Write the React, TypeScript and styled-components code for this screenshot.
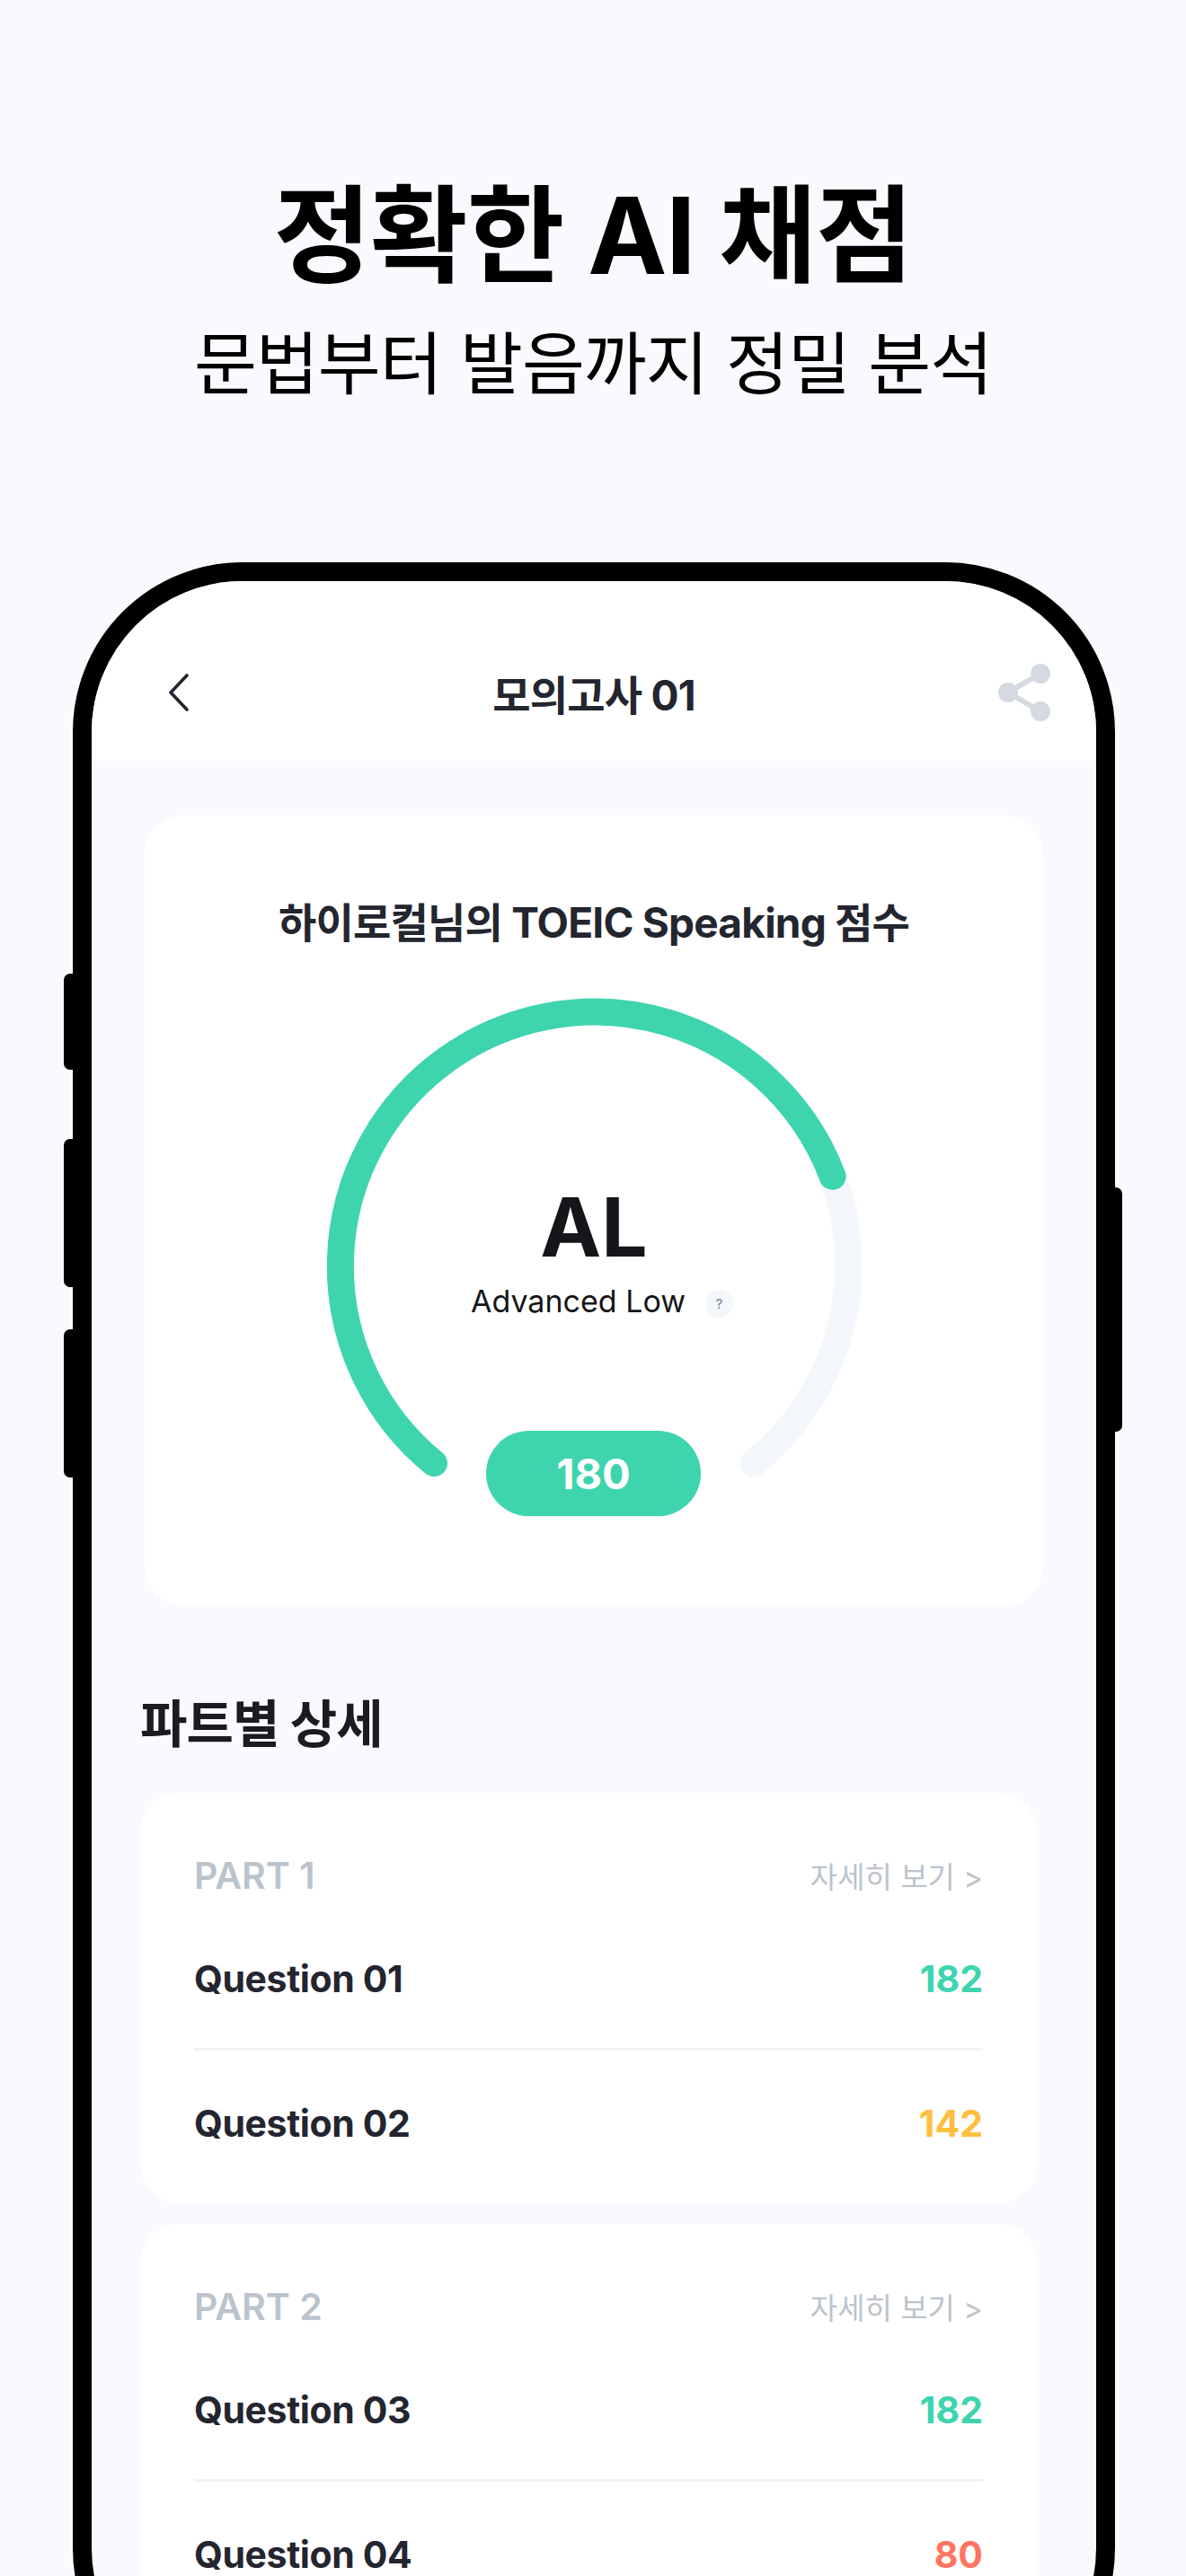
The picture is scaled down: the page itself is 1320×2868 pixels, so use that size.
import React from "react";
import styled, { createGlobalStyle } from "styled-components";

const Global = createGlobalStyle`
  html, body { margin: 0; padding: 0; height: 2868px; overflow: hidden; background: #f9fafe; }
  body { font-family: Inter, "Noto Sans CJK KR", sans-serif; color: #000; }
  * { box-sizing: border-box; }
`;

const Page = styled.div`
  width: 1320px;
  height: 2868px;
  overflow: hidden;
  background: #f9fafe;
`;
const Hero = styled.header`
  height: 626px;
  padding-top: 197px;
  display: flex;
  flex-direction: column;
  align-items: center;
`;
const Headline = styled.h1`
  margin: 0;
  font-size: 118px;
  line-height: 130px;
  font-weight: 700;
  letter-spacing: -1px;
`;
const Subline = styled.p`
  margin: 30px 0 0;
  font-size: 76px;
  line-height: 96px;
  font-weight: 400;
  letter-spacing: -1px;
`;
const Phone = styled.div`
  position: relative;
  width: 1160px;
  height: 2400px;
  margin-left: 81px;
  border: 21px solid #000;
  border-radius: 189px;
  background: #f9fafe;
`;
const SideKey = styled.span<{ $side: "left" | "right"; $top: number; $height: number }>`
  position: absolute;
  top: ${(p) => p.$top}px;
  height: ${(p) => p.$height}px;
  background: #000;
  ${(p) =>
    p.$side === "left"
      ? "left: -31px; width: 10px; border-radius: 7px 0 0 7px;"
      : "right: -29px; width: 8px; border-radius: 0 7px 7px 0;"}
`;
const Screen = styled.div`
  height: 100%;
  border-radius: 168px;
  overflow: hidden;
`;
const NavBar = styled.div`
  height: 200px;
  background: #fff;
  padding: 48px 51px 0 85px;
  display: flex;
  align-items: center;
  justify-content: space-between;
`;
const NavTitle = styled.div`
  font-size: 46px;
  font-weight: 700;
  color: #23262f;
  letter-spacing: -0.8px;
`;
const ScoreCard = styled.section`
  margin: 61px 59px 0;
  height: 879px;
  background: #fff;
  border-radius: 44px;
  display: flex;
  flex-direction: column;
  align-items: center;
  padding-top: 87px;
`;
const ScoreTitle = styled.h2`
  margin: 0;
  font-size: 46px;
  line-height: 64px;
  font-weight: 700;
  color: #23262f;
  letter-spacing: -0.8px;
`;
const Gauge = styled.div`
  position: relative;
  width: 596px;
  height: 596px;
  margin-top: 51px;
  svg { display: block; }
`;
const GaugeCenter = styled.div`
  position: absolute;
  left: 0;
  right: 0;
  top: 201px;
  display: flex;
  flex-direction: column;
  align-items: center;
`;
const Grade = styled.div`
  font-size: 91px;
  line-height: 110px;
  font-weight: 700;
  color: #15161a;
`;
const GradeRow = styled.div`
  margin: 6px 0 0 18px;
  display: flex;
  align-items: center;
  gap: 22px;
`;
const GradeName = styled.span`
  font-size: 34px;
  line-height: 44px;
  color: #15161a;
`;
const Help = styled.span`
  margin-top: 4px;
  width: 31px;
  height: 31px;
  border-radius: 50%;
  background: #f3f6fb;
  color: #8a8f99;
  font-size: 15px;
  font-weight: 500;
  display: flex;
  align-items: center;
  justify-content: center;
`;
const ScorePill = styled.div`
  position: absolute;
  left: 178px;
  top: 483px;
  width: 239px;
  height: 95px;
  border-radius: 48px;
  background: #3ed5ae;
  color: #fff;
  font-size: 47px;
  font-weight: 700;
  display: flex;
  align-items: center;
  justify-content: center;
`;
const SectionTitle = styled.h2`
  margin: 102px 0 45px 54px;
  font-size: 57px;
  line-height: 62px;
  font-weight: 700;
  color: #1b1c20;
  letter-spacing: -1px;
`;
const PartCard = styled.section`
  margin: 0 66px 23px 54px;
  padding: 60px 60px 0;
  height: 457px;
  background: #fff;
  border-radius: 44px;
`;
const PartHeader = styled.div`
  display: flex;
  align-items: center;
  justify-content: space-between;
  height: 64px;
`;
const PartName = styled.span`
  font-size: 41px;
  font-weight: 600;
  color: #bbc3cc;
`;
const MoreLink = styled.span`
  font-size: 33px;
  color: #bbc3cc;
`;
const RowTop = styled.div`
  height: 160px;
  padding-top: 6px;
  display: flex;
  align-items: center;
  justify-content: space-between;
`;
const RowBottom = styled.div`
  height: 164px;
  border-top: 3px solid #f0f2f6;
  display: flex;
  align-items: center;
  justify-content: space-between;
`;
const QuestionName = styled.span`
  font-size: 41px;
  font-weight: 700;
  color: #23262f;
  letter-spacing: -0.4px;
`;
const QuestionScore = styled.span<{ $color: string }>`
  font-size: 41px;
  font-weight: 700;
  color: ${(p) => p.$color};
`;

const TEAL = "#3ed5ae";
const parts = [
  { name: "PART 1", rows: [["Question 01", "182", TEAL], ["Question 02", "142", "#ffbe3d"]] },
  { name: "PART 2", rows: [["Question 03", "182", TEAL], ["Question 04", "80", "#ff7461"]] },
];

export default function App() {
  return (
    <Page>
      <Global />
      <Hero>
        <Headline>정확한 AI 채점</Headline>
        <Subline>문법부터 발음까지 정밀 분석</Subline>
      </Hero>
      <Phone>
        <SideKey $side="left" $top={437} $height={107} />
        <SideKey $side="left" $top={621} $height={165} />
        <SideKey $side="left" $top={833} $height={165} />
        <SideKey $side="right" $top={675} $height={272} />
        <Screen>
          <NavBar>
            <svg width="24" height="44" viewBox="0 0 24 44" fill="none" stroke="#23262f" strokeWidth="3.6" strokeLinecap="round" strokeLinejoin="round">
              <path d="M21 3 3 22l18 19" />
            </svg>
            <NavTitle>모의고사 01</NavTitle>
            <svg width="58" height="64" viewBox="0 0 58 64" fill="#d5dae1" stroke="none">
              <path d="M47 11 11 32l36 21" fill="none" stroke="#d5dae1" strokeWidth="6" />
              <circle cx="47" cy="11" r="11" />
              <circle cx="11" cy="32" r="11" />
              <circle cx="47" cy="53" r="11" />
            </svg>
          </NavBar>
          <ScoreCard>
            <ScoreTitle>하이로컬님의 TOEIC Speaking 점수</ScoreTitle>
            <Gauge>
              <svg width="596" height="596" viewBox="0 0 596 596" fill="none" strokeWidth="30" strokeLinecap="round">
                <path d="M563.6 199.7A283 283 0 0 1 475.6 519" stroke="#f3f6fb" />
                <path d="M120 519A283 283 0 1 1 563.6 199.7" stroke={TEAL} />
              </svg>
              <GaugeCenter>
                <Grade>AL</Grade>
                <GradeRow>
                  <GradeName>Advanced Low</GradeName>
                  <Help>?</Help>
                </GradeRow>
              </GaugeCenter>
              <ScorePill>180</ScorePill>
            </Gauge>
          </ScoreCard>
          <SectionTitle>파트별 상세</SectionTitle>
          {parts.map((part) => (
            <PartCard key={part.name}>
              <PartHeader>
                <PartName>{part.name}</PartName>
                <MoreLink>자세히 보기 &gt;</MoreLink>
              </PartHeader>
              <RowTop>
                <QuestionName>{part.rows[0][0]}</QuestionName>
                <QuestionScore $color={part.rows[0][2]}>{part.rows[0][1]}</QuestionScore>
              </RowTop>
              <RowBottom>
                <QuestionName>{part.rows[1][0]}</QuestionName>
                <QuestionScore $color={part.rows[1][2]}>{part.rows[1][1]}</QuestionScore>
              </RowBottom>
            </PartCard>
          ))}
        </Screen>
      </Phone>
    </Page>
  );
}
